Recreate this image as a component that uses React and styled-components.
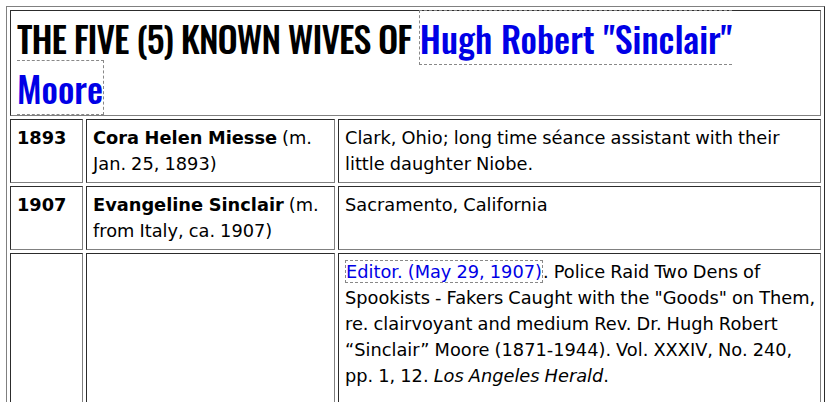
import React from "react";
import styled, { createGlobalStyle } from "styled-components";

const Global = createGlobalStyle`
  html, body { margin: 0; padding: 0; background: #fff; }
  body { padding: 6px 0 0 6px; font-family: "DejaVu Sans", sans-serif; color: #000; }
`;

const Table = styled.table`
  border: 1px outset gray;
  border-collapse: separate;
  border-spacing: 3px;
  width: 819px;
  table-layout: fixed;
`;

const Cell = styled.td`
  border: 1px inset gray;
  padding: ${(p) =>
    p.$title ? "2px 6px 2px 6px" : p.$last ? "5px 2px 14px 6px" : "5px 2px 5px 6px"};
  vertical-align: top;
  font-size: 17.8px;
  line-height: 26px;
  word-spacing: ${(p) => (p.$title ? "0" : "-0.6px")};
  font-weight: ${(p) => (p.$bold ? 700 : 400)};
`;

const Heading = styled.h2`
  margin: 0;
  font-family: "Oswald", "Liberation Sans Narrow", "DejaVu Sans Condensed", sans-serif;
  font-weight: 500;
  font-size: 36px;
  line-height: 50px;
  letter-spacing: -1px;
`;

const Link = styled.a`
  color: #0000e6;
  text-decoration: none;
  border: 1px dashed #888;
`;

const TitleLink = styled(Link)`
  letter-spacing: 0;
`;

const Name = styled.b`
  font-weight: 700;
`;

export default function App() {
  return (
    <>
      <Global />
      <Table>
        <colgroup>
          <col style={{ width: 73 }} />
          <col style={{ width: 249 }} />
          <col />
        </colgroup>
        <tbody>
          <tr>
            <Cell colSpan={3} $title>
              <Heading>
                THE FIVE (5) KNOWN WIVES OF{" "}
                <TitleLink href="#">Hugh Robert "Sinclair" Moore</TitleLink>
              </Heading>
            </Cell>
          </tr>
          <tr>
            <Cell $bold>1893</Cell>
            <Cell>
              <Name>Cora Helen Miesse</Name> (m. Jan. 25, 1893)
            </Cell>
            <Cell>Clark, Ohio; long time séance assistant with their little daughter Niobe.</Cell>
          </tr>
          <tr>
            <Cell $bold>1907</Cell>
            <Cell>
              <Name>Evangeline Sinclair</Name> (m. from Italy, ca. 1907)
            </Cell>
            <Cell>Sacramento, California</Cell>
          </tr>
          <tr>
            <Cell $last></Cell>
            <Cell $last></Cell>
            <Cell $last>
              <Link href="#">Editor. (May 29, 1907)</Link>. Police Raid Two Dens of Spookists - Fakers
              Caught with the "Goods" on Them, re. clairvoyant and medium Rev. Dr. Hugh Robert
              “Sinclair” Moore (1871-1944). Vol. XXXIV, No. 240, pp. 1, 12. <i>Los Angeles Herald</i>.
            </Cell>
          </tr>
        </tbody>
      </Table>
    </>
  );
}
